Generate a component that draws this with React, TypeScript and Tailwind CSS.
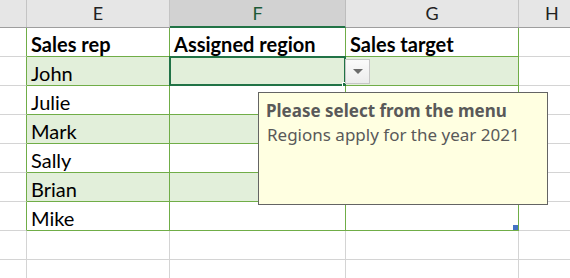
const cols = ['E', 'F', 'G'];

const rows = [
  { cells: ['Sales rep', 'Assigned region', 'Sales target'], bold: true, band: false, table: true },
  { cells: ['John', '', ''], band: true, table: true },
  { cells: ['Julie', '', ''], band: false, table: true },
  { cells: ['Mark', '', ''], band: true, table: true },
  { cells: ['Sally', '', ''], band: false, table: true },
  { cells: ['Brian', '', ''], band: true, table: true },
  { cells: ['Mike', '', ''], band: false, table: true },
  { cells: ['', '', ''], band: false, table: false },
  { cells: ['', '', ''], band: false, table: false },
];

const widths = ['w-[143px]', 'w-[176px]', 'w-[173px]'];

function DropButton() {
  return (
    <div className="absolute left-full top-[2px] z-10 w-[25px] h-[25px] border border-[#c6c6c6] bg-gradient-to-b from-[#fbfbfb] to-[#ececec] flex items-center justify-center">
      <svg width="10" height="6" viewBox="0 0 10 6">
        <path d="M0 0 L10 0 L5 5 Z" fill="#6b6b6b" />
      </svg>
    </div>
  );
}

export default function App() {
  return (
    <div className="w-[570px] h-[278px] overflow-hidden bg-white relative font-['Lato','Liberation_Sans',sans-serif] text-black">
      {/* column headers */}
      <div className="flex h-[28px] bg-[#e6e6e6] border-b border-[#9e9e9e] text-[18px] text-[#222]">
        <div className="w-[27px] shrink-0 border-r border-[#c4c4c4]" />
        {cols.map((c, i) => (
          <div
            key={c}
            className={
              i === 1
                ? 'w-[176px] shrink-0 flex items-center justify-center border-r border-[#bdbdbd] bg-[#d2d2d2] border-b-2 border-b-[#217346] -mb-px text-[#1d5a37]'
                : `${widths[i]} shrink-0 flex items-center justify-center border-r border-[#c4c4c4]`
            }
          >
            {c}
          </div>
        ))}
        <div className="flex-1 flex items-center pl-[26px]">H</div>
      </div>

      {/* body rows */}
      {rows.map((r, ri) => {
        const line = r.table ? 'border-[#70ad47]' : 'border-[#d4d4d4]';
        return (
          <div key={ri} className="flex h-[29px]">
            <div className={`w-[27px] shrink-0 border-b border-[#d4d4d4] border-r ${r.table ? 'border-r-[#70ad47]' : 'border-r-[#d4d4d4]'}`} />
            {r.cells.map((t, ci) => (
              <div
                key={ci}
                className={`${widths[ci]} shrink-0 relative border-b border-r ${line} ${r.band ? 'bg-[#e2efda]' : 'bg-white'} flex items-end pl-[4px] text-[20px] leading-[24px] whitespace-nowrap ${r.bold ? 'font-bold' : ''}`}
              >
                {t}
                {ri === 1 && ci === 1 && (
                  <>
                    <div className="absolute -left-[1px] -top-[1px] -right-[1px] -bottom-[1px] border-2 border-[#217346] pointer-events-none" />
                    <div className="absolute -right-[4px] -bottom-[4px] w-[7px] h-[7px] bg-[#217346] border border-white" />
                    <DropButton />
                  </>
                )}
                {ri === 6 && ci === 2 && (
                  <div className="absolute right-0 bottom-0 w-[5px] h-[5px] bg-[#4472c4]" />
                )}
              </div>
            ))}
            <div className="flex-1 border-b border-[#d4d4d4]" />
          </div>
        );
      })}

      {/* input message tooltip */}
      <div className="absolute left-[258px] top-[92px] w-[290px] h-[113px] bg-[#ffffe1] border border-[#646464] px-[7px] pt-[6px] text-[#595959] font-['Noto_Sans','Open_Sans',sans-serif] text-[17px] leading-[24px]">
        <div className="font-bold">Please select from the menu</div>
        <div className="pl-px">Regions apply for the year 2021</div>
      </div>
    </div>
  );
}
